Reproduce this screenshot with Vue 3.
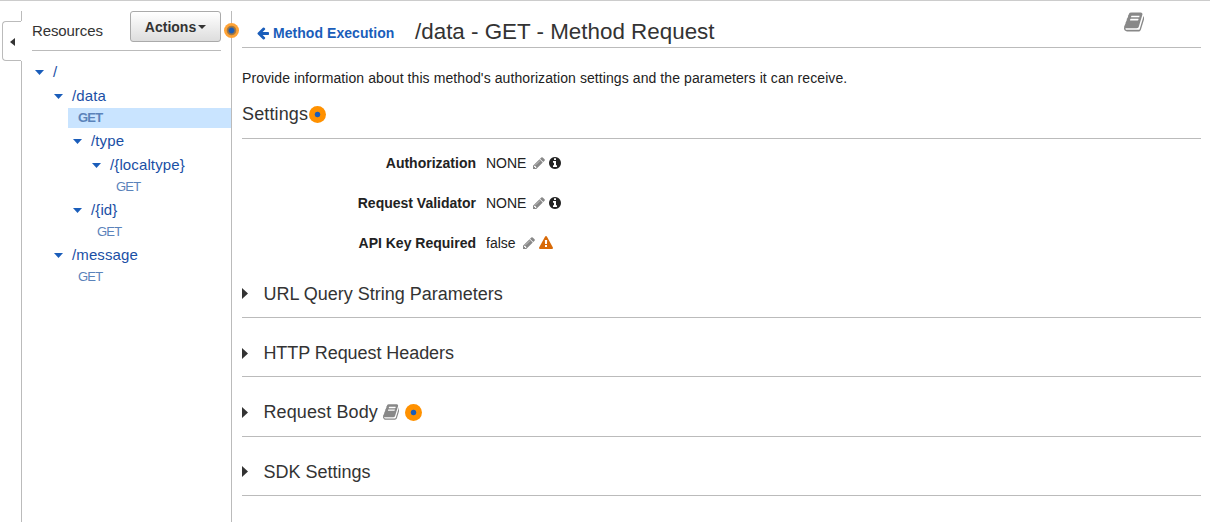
<script setup>
const tree = [
  { label: '/', depth: 0 },
  { label: '/data', depth: 1 },
  { label: 'GET', depth: 2, method: true, selected: true },
  { label: '/type', depth: 2 },
  { label: '/{localtype}', depth: 3 },
  { label: 'GET', depth: 4, method: true },
  { label: '/{id}', depth: 2 },
  { label: 'GET', depth: 3, method: true },
  { label: '/message', depth: 1 },
  { label: 'GET', depth: 2, method: true },
]
const settings = [
  { name: 'Authorization', value: 'NONE' },
  { name: 'Request Validator', value: 'NONE' },
  { name: 'API Key Required', value: 'false', warn: true },
]
const sections = [
  { title: 'URL Query String Parameters' },
  { title: 'HTTP Request Headers', tight: true },
  { title: 'Request Body', extras: true },
  { title: 'SDK Settings' },
]
const book = 'M1639 478q40 57 18 129l-275 906q-19 64-76.5 107.5t-122.5 43.5h-923q-77 0-148.5-53.5t-99.5-131.5q-24-67-2-127 0-4 3-27t4-37q1-8-3-21.5t-3-19.5q2-11 8-21t16.5-23.5 16.5-23.5q23-38 45-91.5t30-91.5q3-10 .5-30t-.5-28q3-11 17-28t17-23q21-36 42-92t25-90q1-9-2.5-32t.5-28q4-13 22-30.5t22-22.5q19-26 42.5-84.5t27.5-96.5q1-8-3-25.5t-2-26.5q2-8 9-18t18-23 17-21q8-12 16.5-30.5t15-35 16-36 19.5-32 26.5-23.5 36-11.5 47.5 5.5l-1 3q38-9 51-9h761q74 0 114 56t18 130l-274 906q-36 119-71.5 153.5t-128.5 34.5h-869q-27 0-38 15-11 16-1 43 24 70 144 70h923q29 0 56-15.5t35-41.5l300-987q7-22 5-57 38 15 59 43zm-1064 2q-4 13 2 22.5t20 9.5h608q13 0 25.5-9.5t16.5-22.5l21-64q4-13-2-22.5t-20-9.5h-608q-13 0-25.5 9.5t-16.5 22.5zm-83 256q-4 13 2 22.5t20 9.5h608q13 0 25.5-9.5t16.5-22.5l21-64q4-13-2-22.5t-20-9.5h-608q-13 0-25.5 9.5t-16.5 22.5z'
const pencil = 'M363 1536l91-91-235-235-91 91v107h128v128h107zm523-928q0-22-22-22-10 0-17 7l-542 542q-7 7-7 17 0 22 22 22 10 0 17-7l542-542q7-7 7-17zm-54-192l416 416-832 832h-416v-416zm683 96q0 53-37 90l-166 166-416-416 166-165q36-38 90-38 53 0 91 38l235 234q37 39 37 91z'
const info = 'M1024 1376v-160q0-14-9-23t-23-9h-96v-512q0-14-9-23t-23-9h-320q-14 0-23 9t-9 23v160q0 14 9 23t23 9h96v320h-96q-14 0-23 9t-9 23v160q0 14 9 23t23 9h448q14 0 23-9t9-23zm-128-896v-160q0-14-9-23t-23-9h-192q-14 0-23 9t-9 23v160q0 14 9 23t23 9h192q14 0 23-9t9-23zm640 416q0 209-103 385.5t-279.5 279.5-385.5 103-385.5-103-279.5-279.5-103-385.5 103-385.5 279.5-279.5 385.5-103 385.5 103 279.5 279.5 103 385.5z'
const warning = 'M1024 1375v-190q0-14-9.5-23.5t-22.5-9.5h-192q-13 0-22.5 9.5t-9.5 23.5v190q0 14 9.5 23.5t22.5 9.5h192q13 0 22.5-9.5t9.5-23.5zm-2-374l18-459q0-12-10-19-13-11-24-11h-220q-11 0-24 11-10 7-10 21l17 457q0 10 10 16.5t24 6.5h185q14 0 23.5-6.5t10.5-16.5zm-14-934l768 1408q35 63-2 126-17 29-46.5 46t-63.5 17h-1536q-34 0-63.5-17t-46.5-46q-37-63-2-126l768-1408q17-31 47-49t65-18 65 18 47 49z'
const arrow = 'M1664 896v128q0 53-32.5 90.5t-84.5 37.5h-704l293 294q38 36 38 90t-38 90l-75 76q-37 37-90 37-52 0-91-37l-651-652q-37-37-37-90 0-52 37-91l651-650q38-38 91-38 52 0 90 38l75 74q38 38 38 91t-38 91l-293 293h704q52 0 84.5 37.5t32.5 90.5z'
</script>

<template>
  <div class="page">
    <div class="gutter">
      <div class="rail-top"></div>
      <div class="collapse"><svg width="5" height="8" viewBox="0 0 5 8"><path d="M5 0v8L0 4z" fill="#333" /></svg></div>
      <div class="rail"></div>
    </div>

    <aside class="sidebar">
      <div class="side-head">
        <span class="side-title">Resources</span>
        <button class="actions"><span>Actions</span><svg width="8" height="4" viewBox="0 0 8 4"><path d="M0 0h8L4 4z" fill="#333" /></svg></button>
      </div>
      <div class="tree">
        <div
          v-for="(n, i) in tree"
          :key="i"
          :class="['node', { method: n.method, selected: n.selected }]"
          :style="{ marginLeft: n.depth * 19 - 2 + 'px' }"
        >
          <svg v-if="!n.method" class="caret" width="9" height="5" viewBox="0 0 9 5"><path d="M0 0h9L4.500 5z" fill="#1a5dba" /></svg>
          <span class="label">{{ n.label }}</span>
        </div>
      </div>
      <span class="beacon edge"></span>
    </aside>

    <main class="main">
      <header class="head">
        <a class="back"><svg width="14" height="14" viewBox="64 0 1664 1792"><path :d="arrow" fill="#1a5dba" /></svg><span>Method Execution</span></a>
        <h1>/data - GET - Method Request</h1>
        <svg class="docs" width="20.4" height="22" viewBox="0 0 1664 1792"><path :d="book" fill="#888" /></svg>
      </header>
      <p class="intro">Provide information about this method's authorization settings and the parameters it can receive.</p>
      <h2 class="settings-title"><span>Settings</span><span class="beacon"></span></h2>
      <div class="settings">
        <div v-for="s in settings" :key="s.name" class="row">
          <span class="name">{{ s.name }}</span>
          <span :class="['value', { bool: s.warn }]">{{ s.value }}</span>
          <svg class="pencil" width="12" height="14" viewBox="0 0 1536 1792"><path :d="pencil" fill="#888" /></svg>
          <svg v-if="s.warn" width="14" height="14" viewBox="0 0 1792 1792"><path :d="warning" fill="#d86a08" /></svg>
          <svg v-else width="12" height="14" viewBox="0 0 1536 1792"><path :d="info" fill="#222" /></svg>
        </div>
      </div>
      <section v-for="s in sections" :key="s.title" class="section">
        <svg class="tri" width="6" height="11" viewBox="0 0 6 11"><path d="M0 0v11l6-5.500z" fill="#333" /></svg>
        <h2 :class="{ tight: s.tight, wide: s.extras }">{{ s.title }}</h2>
        <template v-if="s.extras">
          <svg class="book-small" width="16.700" height="18" viewBox="0 0 1664 1792"><path :d="book" fill="#888" /></svg>
          <span class="beacon"></span>
        </template>
      </section>
    </main>
  </div>
</template>

<style>
body { margin: 0; background: #fff; overflow: hidden; }
</style>

<style scoped>
* { box-sizing: border-box; }
.page {
  display: flex;
  width: 1210px;
  height: 522px;
  border-top: 1px solid #ccc;
  font-family: "Liberation Sans", Arial, sans-serif;
  color: #333;
  overflow: hidden;
}
svg { display: block; flex: none; }
h1, h2, p { margin: 0; font-weight: 400; white-space: nowrap; }
.gutter { width: 22px; display: flex; flex-direction: column; padding: 10px 0 0 2px; }
.rail-top { height: 10px; border-right: 1px solid #bbb; }
.collapse {
  height: 40px;
  margin-right: 1px;
  border: 1px solid #bbb;
  border-right: 0;
  border-radius: 4px 0 0 4px;
  display: flex;
  align-items: center;
  padding: 1px 0 0 7px;
}
.rail { flex: 1; border-right: 1px solid #bbb; }
.sidebar {
  position: relative;
  width: 210px;
  margin-top: 10px;
  border-right: 1px solid #bbb;
}
.side-head {
  display: flex;
  justify-content: space-between;
  height: 40px;
  margin: 0 10px;
  border-bottom: 1px solid #bbb;
}
.side-title { font-size: 15px; line-height: 40px; letter-spacing: -0.1px; }
.actions {
  display: flex;
  align-items: center;
  justify-content: center;
  gap: 2px;
  width: 91px;
  height: 31px;
  padding: 0;
  border: 1px solid #aaa;
  border-radius: 3px;
  background: linear-gradient(#fff, #ddd);
  color: #333;
  font: bold 14px "Liberation Sans", Arial, sans-serif;
}
.actions svg { margin-top: 1px; }
.tree { padding: 9px 0 0 10px; }
.node {
  display: flex;
  align-items: center;
  height: 24px;
  padding-left: 5px;
  color: #1a4fa5;
  font-size: 15px;
  letter-spacing: 0.120px;
}
.label { padding-bottom: 2px; }
.caret { margin: 0 9px 0 0; }
.method { height: 20px; margin-bottom: 1px; padding-left: 10px; color: #5b83ba; font-size: 13px; letter-spacing: -0.8px; }
.selected { background: #c9e4ff; font-weight: bold; letter-spacing: -0.8px; }
.beacon {
  display: block;
  flex: none;
  width: 17px;
  height: 17px;
  border-radius: 50%;
  background: radial-gradient(circle, #1a5dba 2.4px, #ff9100 3.2px);
}
.edge {
  position: absolute;
  right: -8px;
  top: 12px;
  width: 15px;
  height: 15px;
  background: radial-gradient(circle, #1a5dba 2.4px, #9b7442 3.4px, #a87b43 4.4px, #ffa336 5.2px);
}
.main { flex: 1; padding: 0 9px 0 10px; }
.head { display: flex; height: 47px; border-bottom: 1px solid #bbb; padding-left: 14px; }
.back { display: flex; align-items: center; gap: 3px; height: 64px; color: #1a5dba; font-weight: bold; font-size: 14px; letter-spacing: 0.050px; white-space: nowrap; width: 159px; }
h1 { font-size: 22.400px; line-height: 61px; color: #333; }
.docs { margin: 10px 57px 0 auto; }
.intro { font-size: 14px; line-height: 20px; margin-top: 20px; color: #222; letter-spacing: 0.083px; }
.settings-title { display: flex; align-items: center; gap: 1px; height: 51px; padding-top: 3px; border-bottom: 1px solid #bbb; letter-spacing: 0.140px; }
.settings { padding-top: 4px; height: 119.750px; }
.row { display: flex; align-items: center; height: 40px; font-size: 14px; color: #222; }
.name { width: 234px; margin-right: 10px; text-align: right; font-weight: bold; white-space: nowrap; }
.value { width: 47px; }
.bool { width: 37px; }
.pencil { margin-right: 4px; }
.section { display: flex; align-items: center; height: 59.330px; border-bottom: 1px solid #bbb; padding-top: 12.700px; }
.tri { margin: -1px 15.400px 0 0; }
.section h2, .settings-title { font-size: 18px; }
.tight { letter-spacing: -0.060px; }
.wide { letter-spacing: 0.120px; }
.book-small { margin: -1px 6px 0 4.600px; }
</style>
